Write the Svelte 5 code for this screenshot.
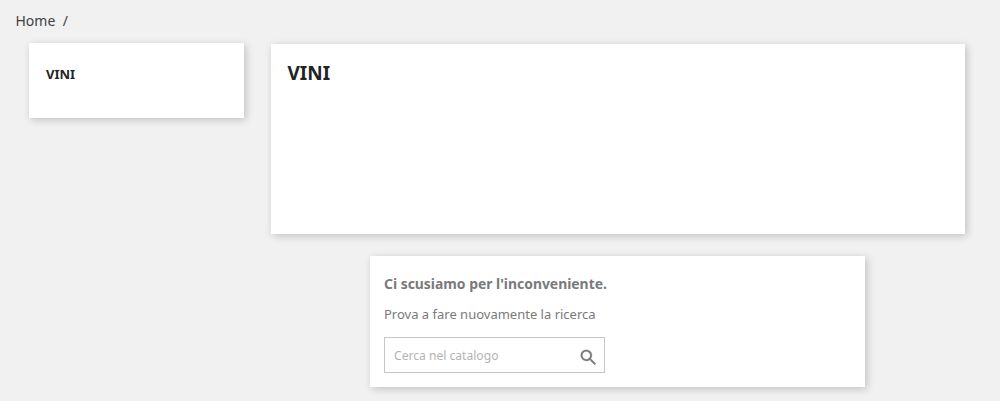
<script>
    let query = $state("");
</script>

<div class="page">
    <nav class="breadcrumb">
        <span>Home</span>
        <span class="sep">/</span>
    </nav>

    <div class="columns">
        <aside class="left">
            <div class="card side-card">
                <h2>VINI</h2>
            </div>
        </aside>

        <main class="right">
            <section class="card header-card">
                <h1>VINI</h1>
            </section>

            <section class="card notfound">
                <h4>Ci scusiamo per l'inconveniente.</h4>
                <p>Prova a fare nuovamente la ricerca</p>
                <form class="search" onsubmit={(e) => e.preventDefault()}>
                    <input type="text" placeholder="Cerca nel catalogo" bind:value={query} />
                    <button type="submit" aria-label="Cerca">
                        <svg viewBox="0 0 24 24" width="21" height="21">
                            <path
                                fill="#7a7a7a"
                                stroke="#7a7a7a"
                                stroke-width="0.25"
                                d="M15.5 14h-.79l-.28-.27A6.47 6.47 0 0 0 16 9.5 6.5 6.5 0 1 0 9.5 16c1.61 0 3.09-.59 4.23-1.57l.27.28v.79l5 4.99L20.49 19l-4.99-5zm-6 0C7.01 14 5 11.99 5 9.5S7.01 5 9.5 5 14 7.01 14 9.5 11.99 14 9.5 14z"
                            />
                        </svg>
                    </button>
                </form>
            </section>
        </main>
    </div>
</div>

<style>
    :global(body) {
        margin: 0;
        background: #f1f1f1;
        font-family: "Noto Sans", sans-serif;
        color: #232323;
    }
    .page {
        height: 401px;
        overflow: hidden;
        box-sizing: border-box;
    }
    .breadcrumb {
        display: flex;
        gap: 7.5px;
        height: 43px;
        padding: 11px 0 0 15.5px;
        box-sizing: border-box;
        font-size: 14px;
        line-height: 20px;
        color: #414141;
    }
    .columns {
        display: flex;
        align-items: flex-start;
        padding-left: 29px;
    }
    .card {
        background: #fff;
        box-shadow: 2px 2px 8px 0 rgba(0, 0, 0, 0.2);
    }
    .left {
        width: 215px;
        flex: none;
    }
    .side-card {
        height: 75px;
        padding: 23px 17px 0;
        box-sizing: border-box;
    }
    .side-card h2 {
        margin: 0;
        font-size: 13px;
        line-height: 17px;
        font-weight: 700;
        color: #232323;
    }
    .right {
        width: 694.5px;
        margin-left: 26.5px;
        margin-top: 1px;
    }
    .header-card {
        height: 190px;
        padding: 18px 17px 0;
        box-sizing: border-box;
    }
    .header-card h1 {
        margin: 0;
        font-size: 19px;
        line-height: 23px;
        font-weight: 700;
        color: #232323;
    }
    .notfound {
        width: 495px;
        height: 131px;
        margin: 22px 0 0 99.5px;
        padding: 18px 14px 0;
        box-sizing: border-box;
        color: #7a7a7a;
    }
    .notfound h4 {
        margin: 0;
        font-size: 13.9px;
        line-height: 19px;
        font-weight: 700;
    }
    .notfound p {
        margin: 13px 0 0;
        font-size: 13px;
        line-height: 17px;
        color: #7a7a7a;
    }
    .search {
        display: flex;
        align-items: center;
        width: 221px;
        height: 36px;
        margin-top: 14px;
        border: 1px solid #c7c7c7;
        box-sizing: border-box;
        background: #fff;
    }
    .search input {
        flex: 1;
        min-width: 0;
        height: 100%;
        border: 0;
        outline: 0;
        padding: 0 0 0 9px;
        background: transparent;
        font: 12.1px/17px "Noto Sans", sans-serif;
        color: #7a7a7a;
    }
    .search input::placeholder {
        color: #b3b3b3;
        opacity: 1;
    }
    .search button {
        display: flex;
        padding: 0;
        margin: 5px 5.5px 0 0;
        border: 0;
        background: none;
    }
</style>
